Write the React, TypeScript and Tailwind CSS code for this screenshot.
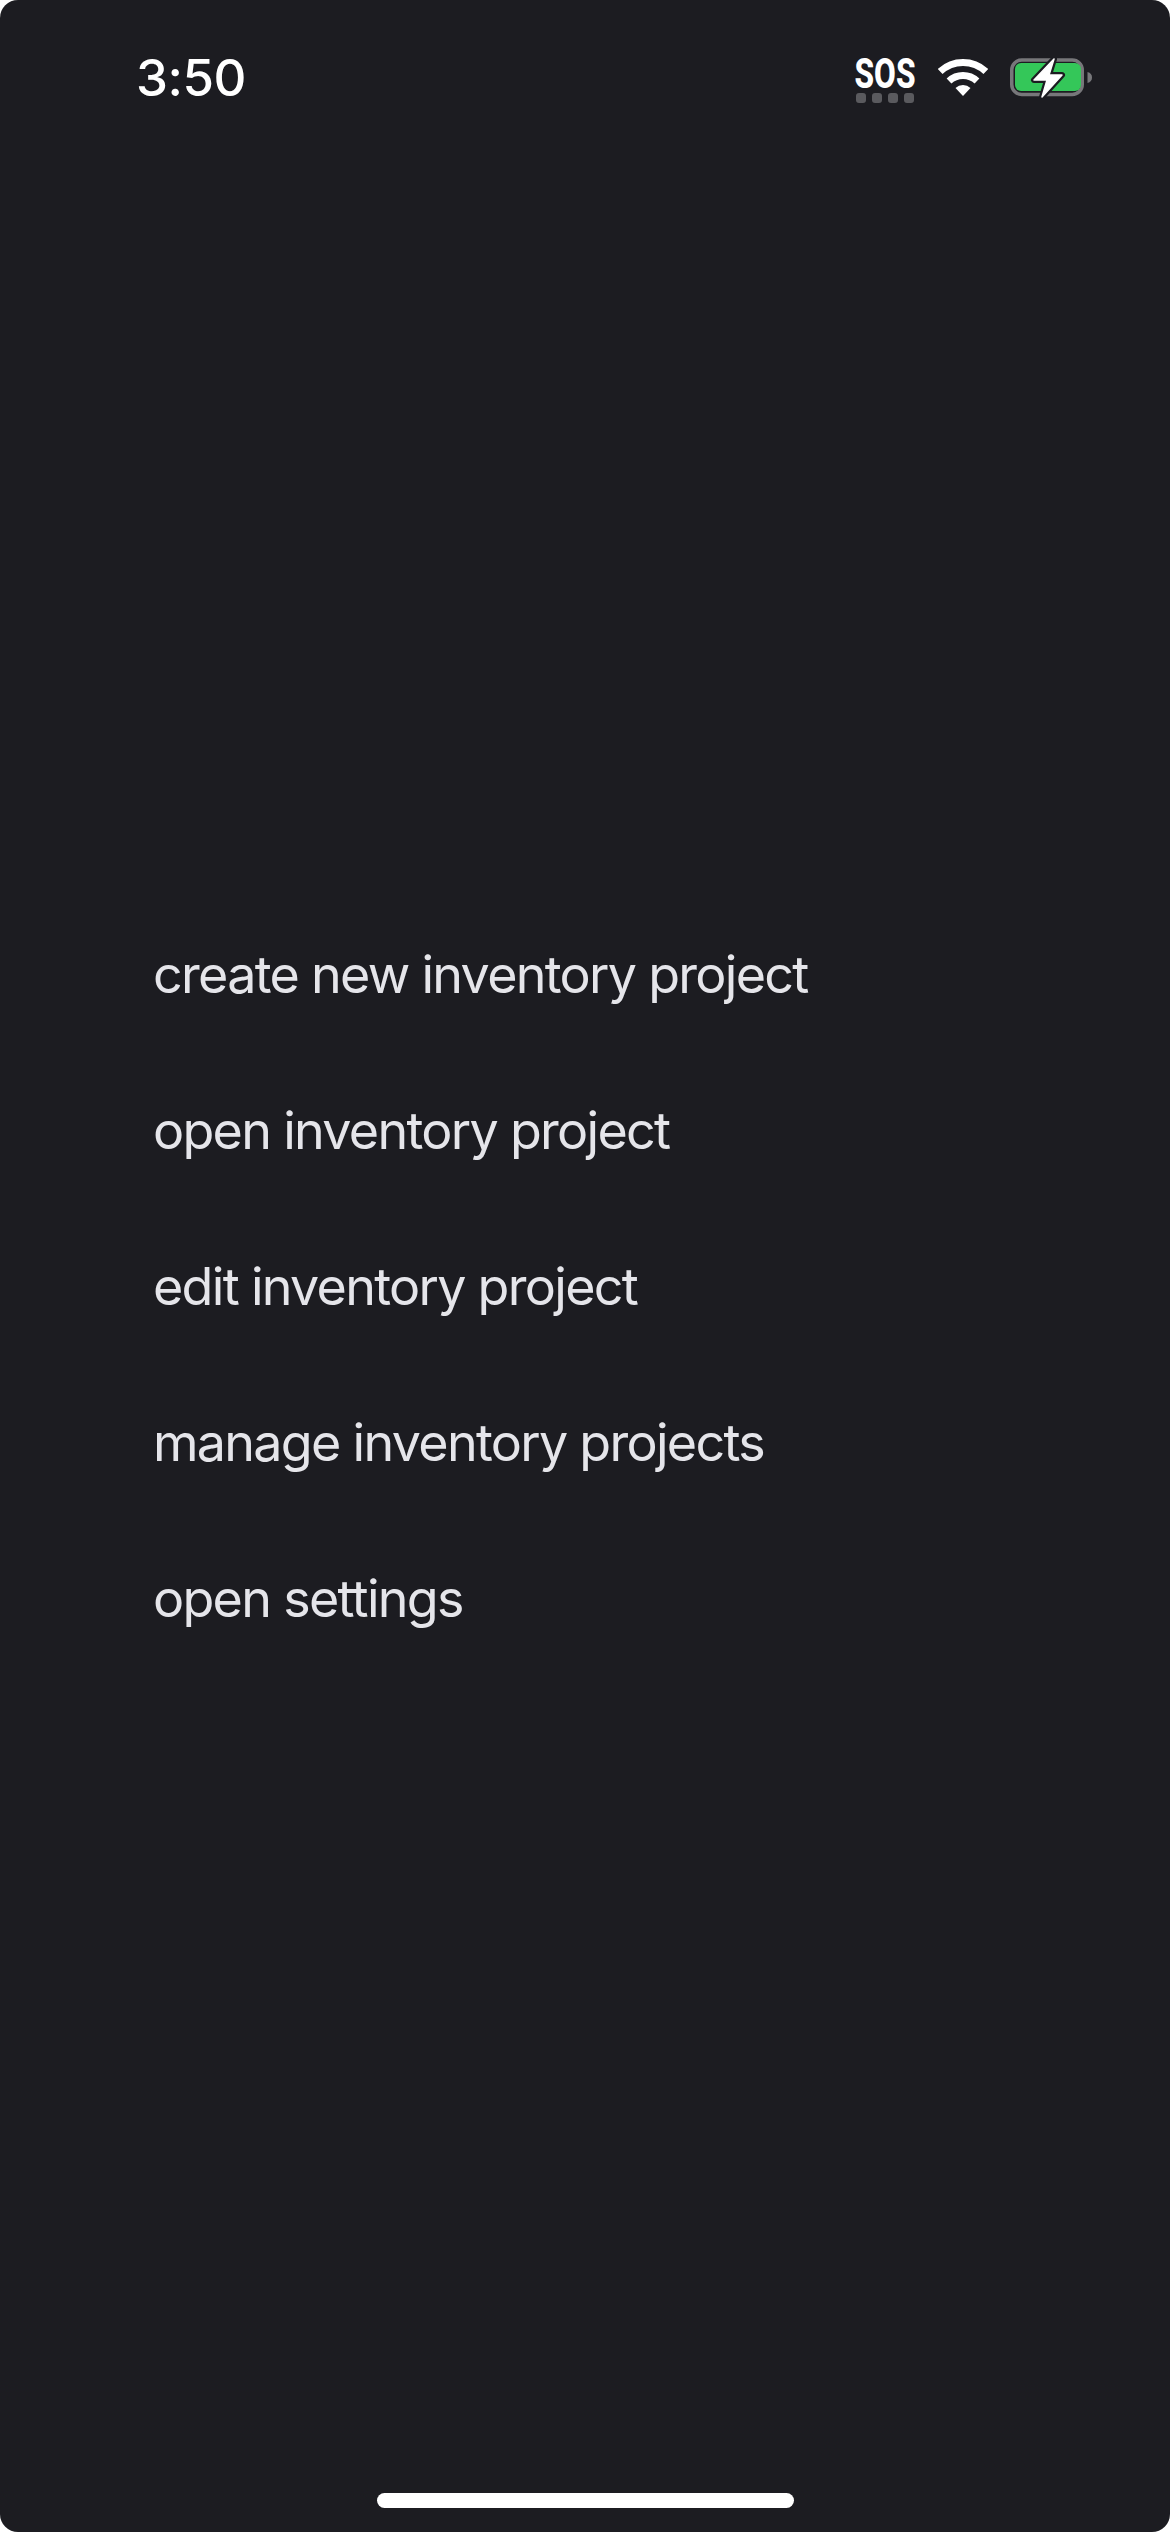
const items = [
  "create new inventory project",
  "open inventory project",
  "edit inventory project",
  "manage inventory projects",
  "open settings",
];

function arc(r: number, deg: number) {
  const a = (deg * Math.PI) / 180;
  const dx = r * Math.sin(a);
  const dy = r * Math.cos(a);
  return `M${25 - dx} ${37 - dy}A${r} ${r} 0 0 1 ${25 + dx} ${37 - dy}`;
}

function Wifi() {
  return (
    <svg width="50" height="37" viewBox="0 0 50 37" className="block" fill="none">
      <path d={arc(33.5, 43)} stroke="#fff" strokeWidth="7" />
      <path d={arc(20.5, 43)} stroke="#fff" strokeWidth="7" />
      <path d={`${arc(11, 43)}L25 37Z`} fill="#fff" />
    </svg>
  );
}

const bolt = "M44 2L24 23H37L32 40L52 18H39Z";

function Battery() {
  return (
    <svg width="84" height="42" viewBox="0 0 84 42" className="block" fill="none">
      <rect x="1.75" y="3" width="70.500" height="34.500" rx="10" stroke="#77777a" strokeWidth="3.500" />
      <rect x="5" y="6" width="66" height="28" rx="6" fill="#34c759" />
      <path d="M77.500 15c3 .8 4.500 2.800 4.500 5.500s-1.500 4.700-4.500 5.500z" fill="#77777a" />
      <path d={bolt} fill="#1c1c21" stroke="#1c1c21" strokeWidth="6" strokeLinejoin="round" />
      <path d={bolt} fill="#fff" stroke="#fff" strokeWidth="1.500" strokeLinejoin="round" />
    </svg>
  );
}

function Sos() {
  return (
    <div className="flex w-[62px] flex-col items-center gap-[5px]">
      <svg width="62" height="31" viewBox="0 0 62 31" className="block overflow-visible">
        <text
          x="31"
          y="30.500"
          textAnchor="middle"
          textLength="61"
          lengthAdjust="spacingAndGlyphs"
          fill="#fff"
          fontFamily="Roboto, sans-serif"
          fontWeight="800"
          fontSize="42"
        >
          SOS
        </text>
      </svg>
      <div className="flex gap-[6px]">
        {[0, 1, 2, 3].map((i) => (
          <span key={i} className="block h-[10px] w-[10px] rounded-[3px] bg-[#5a5a5e]" />
        ))}
      </div>
    </div>
  );
}

export default function App() {
  return (
    <div className="h-[2532px] w-[1170px] overflow-hidden bg-white">
      <div className="flex h-full w-full flex-col rounded-[18px] bg-[#1c1c21] font-['Inter',sans-serif]">
        <header className="flex h-[122px] items-start justify-between pl-[136px] pr-[76px] pt-[48px]">
          <span className="text-[51px] font-[550] leading-[60px] tracking-[-0.5px] text-white">3:50</span>
          <div className="mt-[9px] flex items-start">
            <Sos />
            <div className="ml-[22px] mt-[2px]">
              <Wifi />
            </div>
            <div className="ml-[22px]">
              <Battery />
            </div>
          </div>
        </header>
        <main className="flex flex-1 flex-col pl-[153px] pt-[775px]">
          {items.map((t) => (
            <div key={t} className="flex h-[156px] items-center">
              <span className="text-[52px] font-[420] leading-[60px] tracking-[-1.7px] text-[#e5e5ea]">{t}</span>
            </div>
          ))}
        </main>
        <div className="flex justify-center pb-[24px]">
          <div className="h-[15px] w-[417px] rounded-full bg-white" />
        </div>
      </div>
    </div>
  );
}
